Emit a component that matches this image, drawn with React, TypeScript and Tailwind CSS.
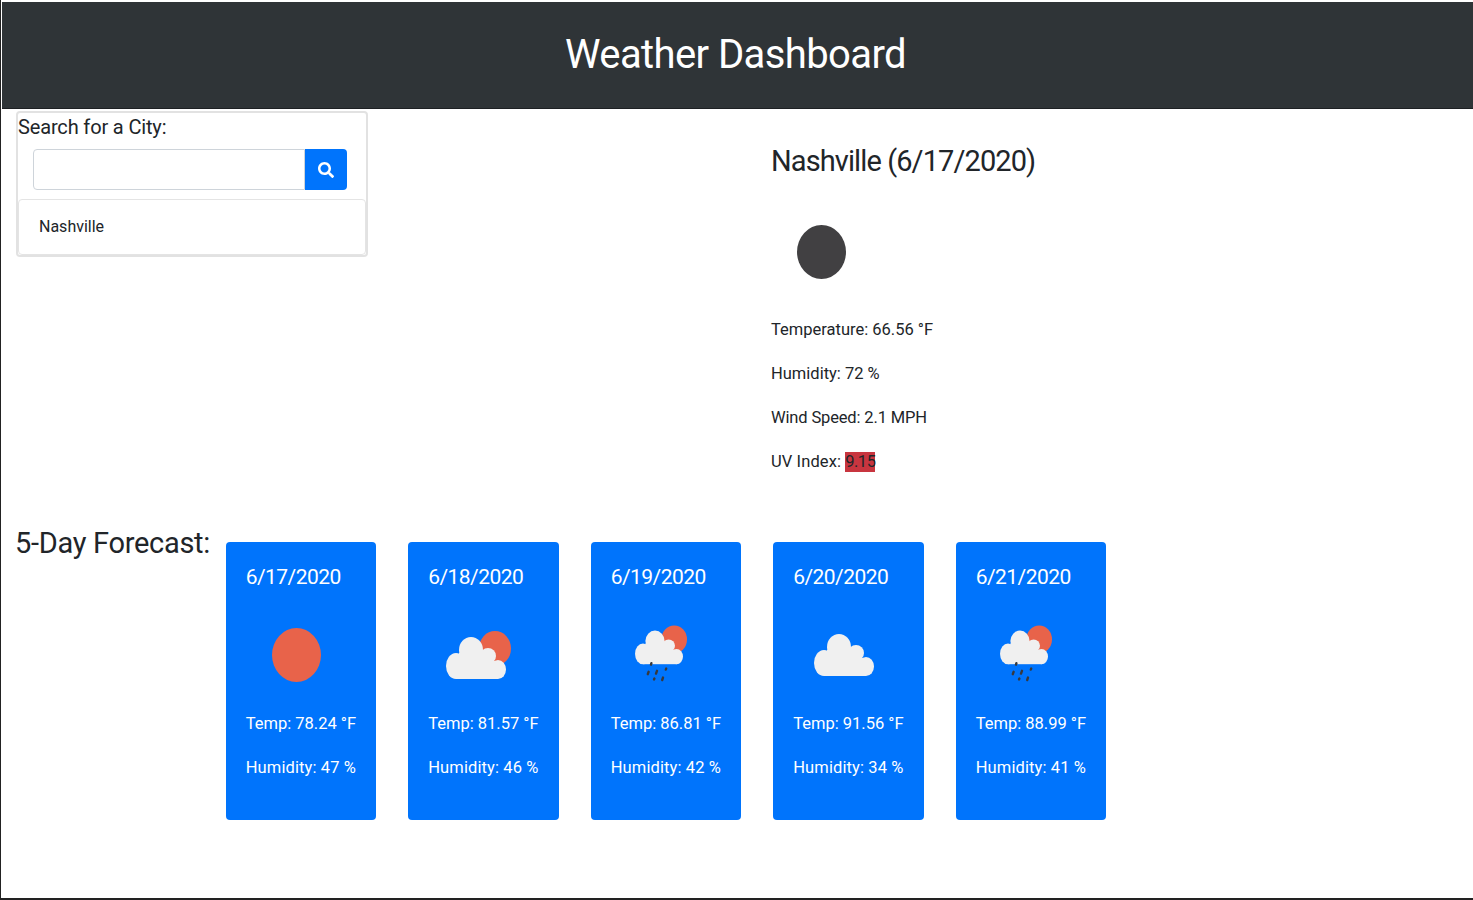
const forecast = [
  { date: "6/17/2020", temp: "78.24", humidity: "47", icon: "sun" },
  { date: "6/18/2020", temp: "81.57", humidity: "46", icon: "cloud-sun" },
  { date: "6/19/2020", temp: "86.81", humidity: "42", icon: "rain" },
  { date: "6/20/2020", temp: "91.56", humidity: "34", icon: "cloud" },
  { date: "6/21/2020", temp: "88.99", humidity: "41", icon: "rain" },
];

function CloudShape() {
  return (
    <g fill="#f0f0f0">
      <ellipse cx="28" cy="61" rx="10" ry="13" />
      <ellipse cx="70" cy="64.5" rx="8" ry="9.5" />
      <ellipse cx="43" cy="45" rx="12" ry="13" />
      <ellipse cx="60" cy="51" rx="8" ry="8" />
      <rect x="28" y="56" width="42" height="18" />
      <rect x="31" y="48" width="33" height="10" />
    </g>
  );
}

function WeatherIcon({ type }: { type: string }) {
  return (
    <svg viewBox="0 0 100 100" className="block w-[100px] h-[100px]">
      {type === "sun" && <ellipse cx="50.5" cy="50" rx="24.5" ry="27" fill="#e8634a" />}
      {type === "moon" && <ellipse cx="50.5" cy="50" rx="24.5" ry="27" fill="#414042" />}
      {type === "cloud-sun" && (
        <>
          <ellipse cx="67" cy="43.5" rx="16" ry="17.5" fill="#e8634a" />
          <CloudShape />
        </>
      )}
      {type === "cloud" && (
        <g transform="translate(3 -3)">
          <CloudShape />
        </g>
      )}
      {type === "rain" && (
        <>
          <g transform="translate(9.6 0) scale(0.8)">
            <ellipse cx="67" cy="43" rx="16" ry="17.5" fill="#e8634a" />
            <CloudShape />
          </g>
          <g stroke="#37393d" strokeWidth="2.4" strokeLinecap="round">
            <path d="M40.4 58.2 L40 59.6" />
            <path d="M37.6 66.8 L36.8 69.2" />
            <path d="M46 65.8 L45 68.6" />
            <path d="M55.2 63.6 L54.8 64.6" />
            <path d="M43.4 73.6 L43 74.4" />
            <path d="M52 72.6 L51.2 75" />
          </g>
        </>
      )}
    </svg>
  );
}

export default function App() {
  return (
    <div className="h-[900px] flex flex-col bg-white text-[#212529] font-['Roboto',sans-serif] border-l border-[#222] border-b-2 overflow-hidden">
      {/* HEADER */}
      <header className="h-[108px] shrink-0 mt-[1px] ml-[1px] bg-[#2f3437] border-t border-t-white border-b border-b-[#1d2023] flex items-center justify-center text-white">
        <h1 className="text-[40px] leading-none -mt-[1px] mr-[4px] tracking-[-0.6px]">Weather Dashboard</h1>
      </header>

      <main className="flex h-[433px] shrink-0">
        {/* SEARCH */}
        <div className="w-[770px] pl-[15px] pt-[2px]">
          <div className="w-[352px] h-[146px] border-2 border-[#e2e2e2] rounded-[4px]">
            <p className="text-[20px] leading-[28px] tracking-[-0.15px]">Search for a City:</p>
            <div className="flex ml-[15px] mt-[8px] w-[314px] h-[41px]">
              <input className="flex-1 min-w-0 border border-[#ced4da] rounded-l-[4px] bg-white" />
              <button className="w-[42px] bg-[#0074fc] rounded-r-[4px] flex items-center justify-center">
                <svg viewBox="0 0 512 512" className="w-[16px] h-[16px]" fill="#fff">
                  <path d="M505 442.7L405.3 343c-4.5-4.5-10.6-7-17-7H372c27.6-35.3 44-79.7 44-128C416 93.1 322.9 0 208 0S0 93.1 0 208s93.1 208 208 208c48.3 0 92.7-16.4 128-44v16.3c0 6.4 2.5 12.5 7 17l99.7 99.7c9.4 9.4 24.6 9.4 33.9 0l28.3-28.3c9.4-9.4 9.4-24.6.1-34zM208 336c-70.7 0-128-57.2-128-128 0-70.7 57.2-128 128-128 70.7 0 128 57.2 128 128 0 70.7-57.2 128-128 128z" />
                </svg>
              </button>
            </div>
            <div className="mt-[9px] h-[56px] border border-[#e4e4e4] rounded-[4px] pl-[20px] flex items-center text-[16px]">
              Nashville
            </div>
          </div>
        </div>

        {/* CURRENT WEATHER */}
        <section>
          <h2 className="text-[29px] leading-[36px] mt-[34px] font-normal tracking-[-0.9px] whitespace-nowrap">Nashville (6/17/2020)</h2>
          <div className="mt-[23px]">
            <WeatherIcon type="moon" />
          </div>
          <div className="text-[16.5px] leading-[24px] mt-[16px] flex flex-col gap-[20px]">
            <p>Temperature: 66.56 °F</p>
            <p>Humidity: 72 %</p>
            <p className="tracking-[-0.15px]">Wind Speed: 2.1 MPH</p>
            <p className="tracking-[0.1px]">
              UV Index: <span className="bg-[#c8353f] inline-block leading-[20px] tracking-[-0.5px]">9.15</span>
            </p>
          </div>
        </section>
      </main>

      {/* FORECAST */}
      <section className="flex pl-[14px]">
        <h3 className="w-[210.7px] text-[29px] leading-[36px] font-normal -mt-[17px] h-[36px] whitespace-nowrap tracking-[-0.3px]">5-Day Forecast:</h3>
        <div className="flex gap-[32px]">
          {forecast.map((day) => (
            <div key={day.date} className="w-[150.5px] h-[278px] bg-[#0074fc] rounded-[4px] text-white pl-[20px]">
              <h4 className="text-[21px] leading-[28px] mt-[21px] tracking-[-0.55px]">{day.date}</h4>
              <div className="mt-[14px]">
                <WeatherIcon type={day.icon} />
              </div>
              <p className="text-[16.5px] leading-[24px] mt-[7px] whitespace-nowrap">Temp: {day.temp} °F</p>
              <p className="text-[16.5px] leading-[24px] mt-[20px] whitespace-nowrap tracking-[0.12px]">Humidity: {day.humidity} %</p>
            </div>
          ))}
        </div>
      </section>
    </div>
  );
}
